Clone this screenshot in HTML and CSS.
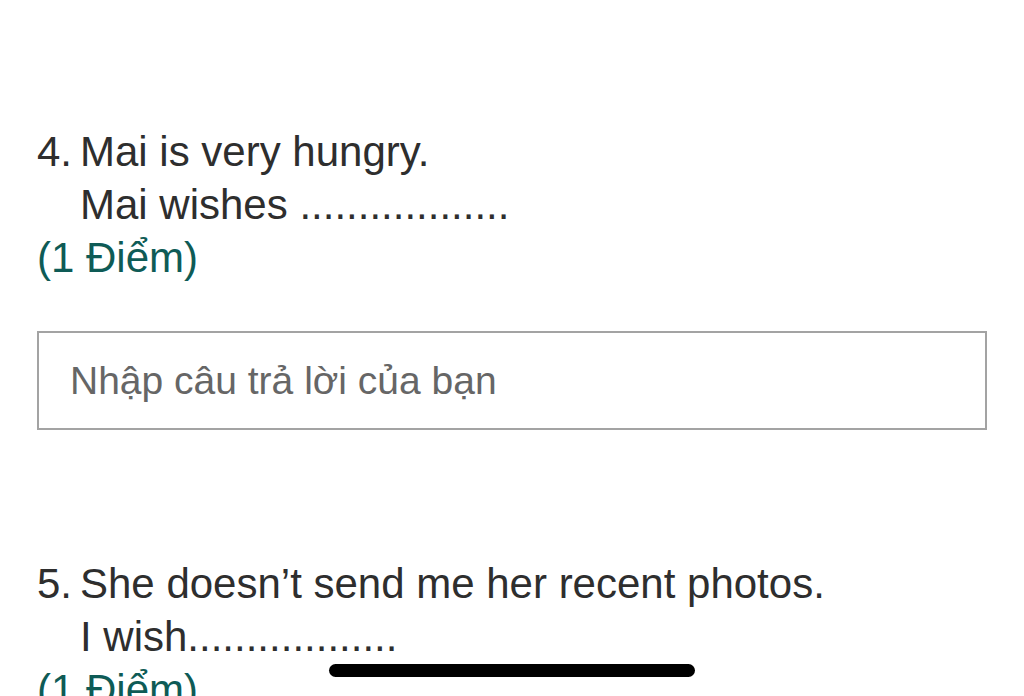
FILE: index.html
```html
<!DOCTYPE html>
<html lang="vi">
<head>
    <meta charset="UTF-8">
    <meta name="viewport" content="width=device-width, initial-scale=1.0">
    <title>Biểu mẫu</title>
    <link rel="stylesheet" href="styles.css">
</head>
<body>
    <div class="form-page">
        <div class="question">
            <div class="question-title">
                <span class="question-number">4.</span>
                <div class="question-text">
                    <div>Mai is very hungry.</div>
                    <div>Mai wishes ..................</div>
                </div>
            </div>
            <div class="question-points">(1 Điểm)</div>
            <input type="text" class="answer-input" placeholder="Nhập câu trả lời của bạn">
        </div>

        <div class="question question-next">
            <div class="question-title">
                <span class="question-number">5.</span>
                <div class="question-text">
                    <div>She doesn’t send me her recent photos.</div>
                    <div>I wish..................</div>
                </div>
            </div>
            <div class="question-points">(1 Điểm)</div>
        </div>
    </div>

    <div class="home-indicator"></div>
</body>
</html>
```

FILE: styles.css
```css
body {
    font-family: "Liberation Sans", Arial, sans-serif;
    background-color: #fff;
    margin: 0;
    padding: 0;
    overflow: hidden;
    height: 696px;
}

.form-page {
    padding: 125px 37px 0 37px;
}

.question {
    color: #2e2e2e;
    font-size: 42px;
    line-height: 53px;
}

.question-title {
    display: flex;
}

.question-number {
    width: 43px;
    flex-shrink: 0;
}

.question-points {
    color: #0e5b56;
}

.answer-input {
    display: block;
    box-sizing: border-box;
    width: 100%;
    height: 99px;
    margin-top: 47px;
    padding: 0 31px;
    border: 2px solid #a3a3a3;
    border-radius: 0;
    font-family: "Liberation Sans", Arial, sans-serif;
    font-size: 39px;
    color: #333;
    outline: none;
}

    .answer-input::placeholder {
        color: #666;
    }

.question-next {
    margin-top: 127px;
}

.home-indicator {
    position: absolute;
    left: 329px;
    top: 664px;
    width: 366px;
    height: 13px;
    border-radius: 7px;
    background: #000;
}
```
